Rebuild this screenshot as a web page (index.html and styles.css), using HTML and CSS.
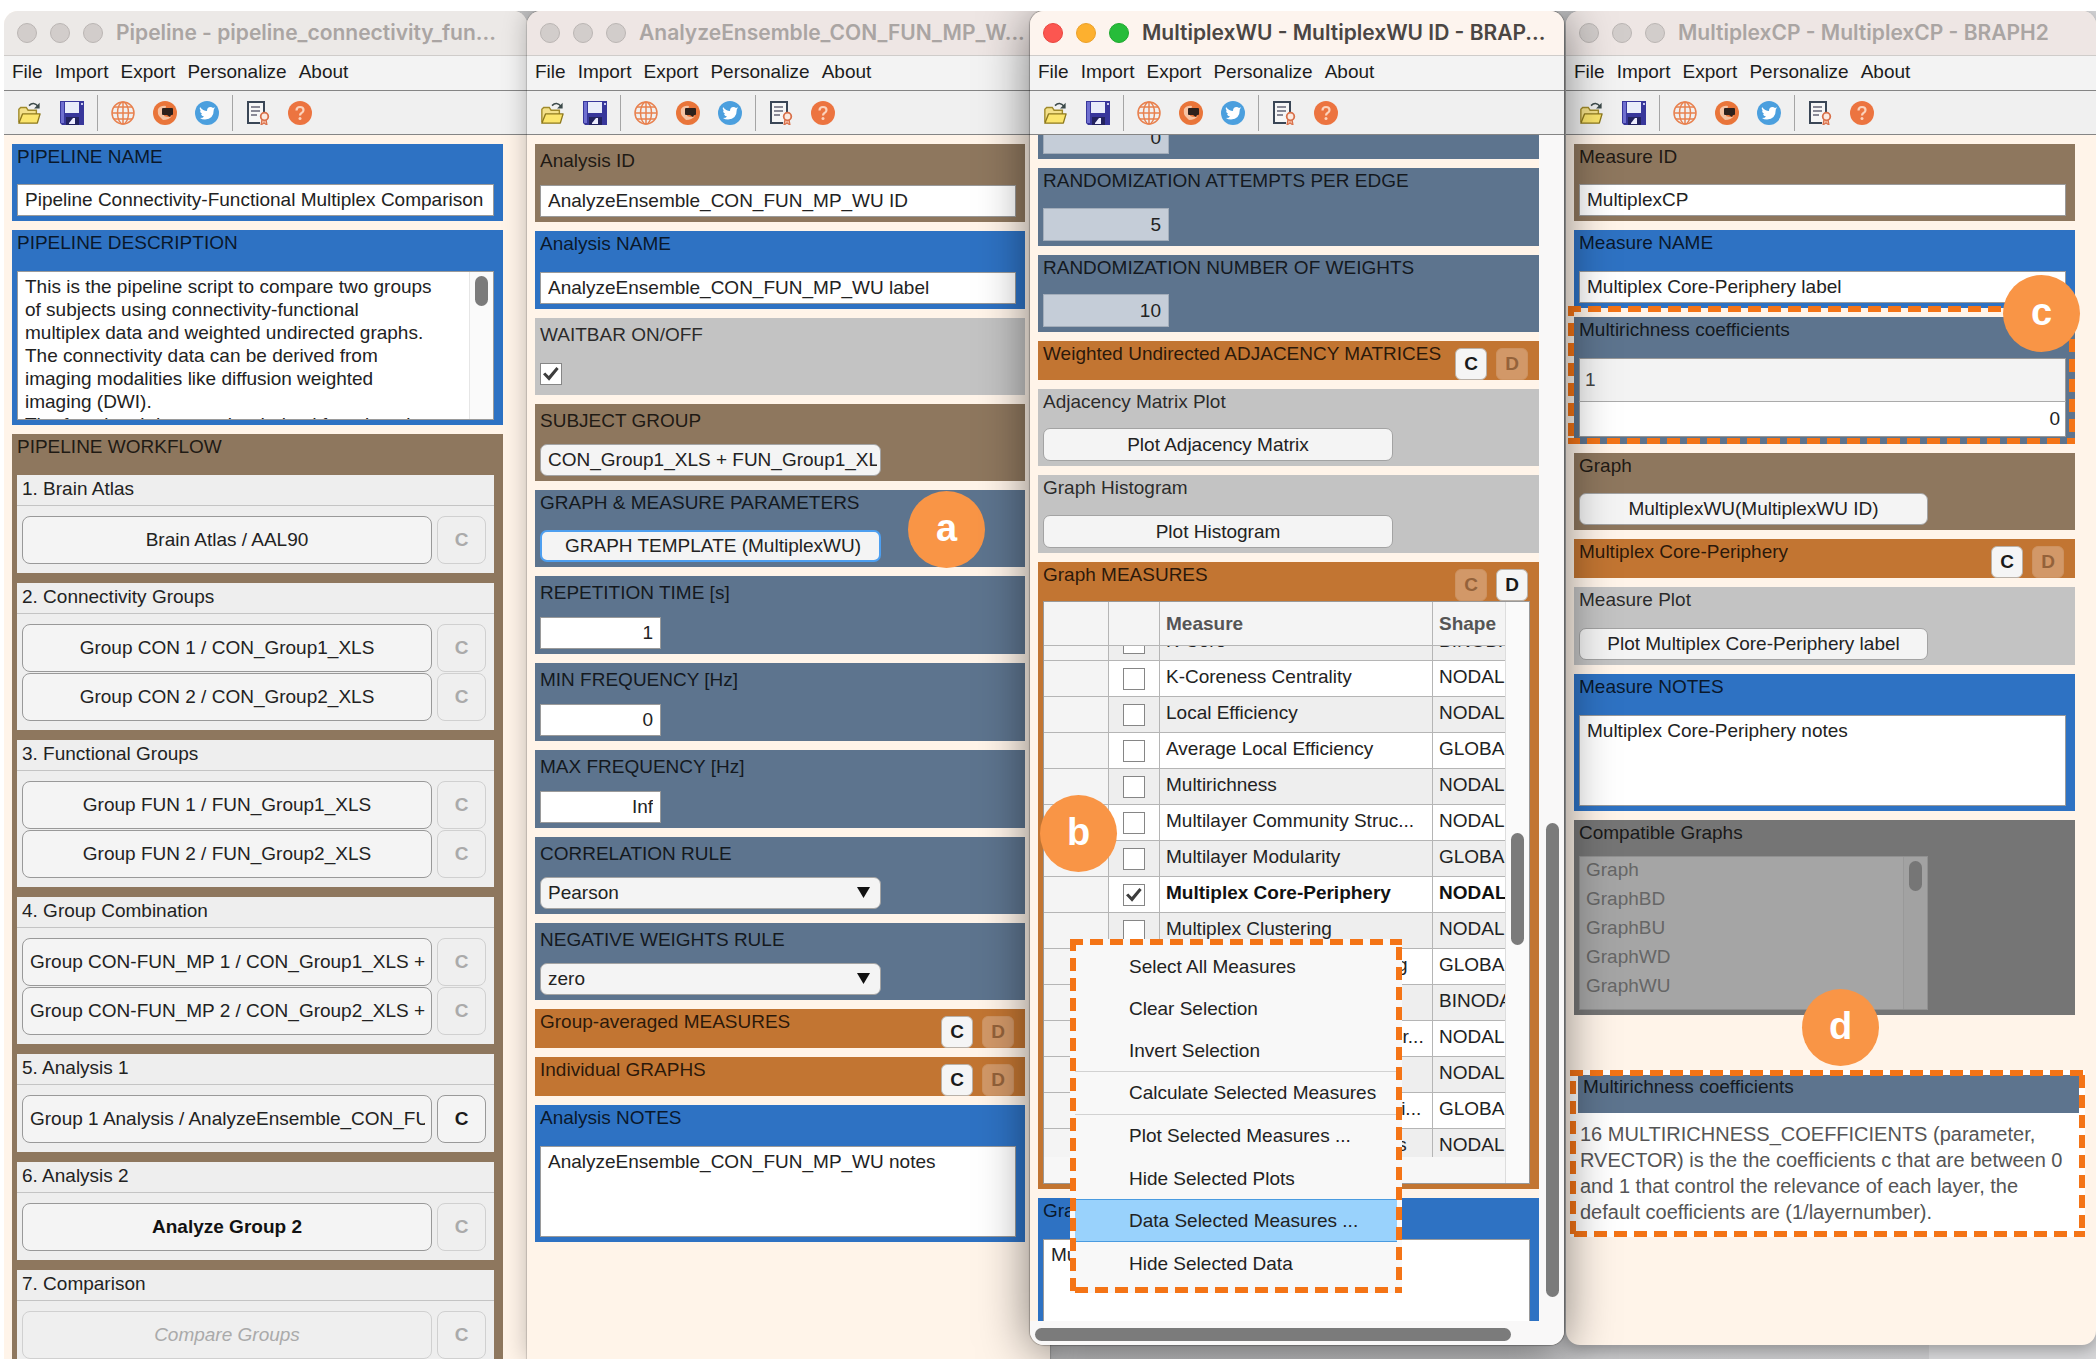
FILE: index.html
```html
<!DOCTYPE html>
<html lang="en">
<head>
<meta charset="utf-8">
<title>BRAPH2</title>
<link rel="stylesheet" href="styles.css">
</head>
<body>
<svg class="sprite" aria-hidden="true">
  <symbol id="i-open" viewBox="0 0 26 26">
    <path d="M2 23V9l2-2h6l2 3h9v4" fill="#f3e08a" stroke="#a08a2a" stroke-width="1.5"/>
    <path d="M2 24l4-10h19l-3 10z" fill="#fbe56c" stroke="#8f7a1e" stroke-width="1.5" stroke-linejoin="round"/>
    <path d="M13 5q5-5 10 1" fill="none" stroke="#3c4a4a" stroke-width="1.6"/>
    <path d="M24.500 2v6h-6z" fill="#3c4a4a"/>
  </symbol>
  <symbol id="i-save" viewBox="0 0 24 24">
    <path d="M0 0h24v24H2l-2-2z" fill="#38379b"/>
    <path d="M1 1h3v21H1z" fill="#6f6fd0"/>
    <path d="M5 1h14v11H5z" fill="#e9edfa"/>
    <path d="M21 2h2v2h-2z" fill="#c9c9f0"/>
    <path d="M6 16h13v8H6z" fill="#23235f"/>
    <path d="M9 22l4-5h2v6H9z" fill="#eef"/>
  </symbol>
  <symbol id="i-web" viewBox="0 0 24 24">
    <g fill="none" stroke="#e8814f" stroke-width="1.500">
      <circle cx="12" cy="12" r="11"/><ellipse cx="12" cy="12" rx="5.500" ry="11"/>
      <path d="M12 1v22M1 12h22M3 6h18M3 18h18"/>
    </g>
  </symbol>
  <symbol id="i-forum" viewBox="0 0 24 24">
    <circle cx="12" cy="12" r="12" fill="#e9753a"/>
    <path d="M5 8q3-4 8-3l-2 10q5 2 8 0-3 4-9 4l-3-3q-3-3-2-8z" fill="#f6c3a3"/>
    <path d="M10 7h9q1 0 1 1v5q0 1-1 1h-1l-1 2-3-2h-4q-1 0-1-1V8q0-1 1-1z" fill="#2e211c"/>
  </symbol>
  <symbol id="i-tw" viewBox="0 0 24 24">
    <circle cx="12" cy="12" r="12" fill="#4b9fde"/>
    <path d="M5 6q3 4 7 4 0-4 3.500-4 1.500 0 2.500 1l2-.8-1.200 2.300q0 9.500-8.800 10-3 0-5-1.500 3 0 4-1.500-2.500-.5-3-2.500h1.200Q5 11.500 5 9.500l1 .3Q4 8 5 6z" fill="#fff"/>
  </symbol>
  <symbol id="i-lic" viewBox="0 0 24 24">
    <path d="M14 22H2V1h16v12" fill="#f6f6f6" stroke="#3a4656" stroke-width="2"/>
    <path d="M5 6h9M5 10h9M5 14h6" stroke="#667" stroke-width="1.500"/>
    <path d="M16 18l-1 6 3-2 3 2-1-6" fill="#f3b49a" stroke="#d9714b" stroke-width="1.200"/>
    <circle cx="18.500" cy="15.500" r="3.800" fill="#fbe9e0" stroke="#d9714b" stroke-width="1.800"/>
  </symbol>
  <symbol id="i-help" viewBox="0 0 24 24">
    <circle cx="12" cy="12" r="12" fill="#ec7440"/>
    <path d="M8.500 9.500q0-3.500 3.500-3.500t3.500 3q0 2-2 3-1.500.8-1.500 2.500" fill="none" stroke="#fbd3bd" stroke-width="2.200"/>
    <circle cx="12" cy="17.500" r="1.500" fill="#fbd3bd"/>
  </symbol>
</svg>

<main class="desktop">

  <section class="window window-pipeline">
    <header class="titlebar"><i class="dot"></i><i class="dot"></i><i class="dot"></i><h2 class="title">Pipeline - pipeline_connectivity_fun...</h2></header>
    <nav class="menubar"><a href="#">File</a><a href="#">Import</a><a href="#">Export</a><a href="#">Personalize</a><a href="#">About</a></nav>
    <div class="toolbar">
      <button class="tool tool-open" aria-label="Open"><svg><use href="#i-open"/></svg></button>
      <button class="tool" aria-label="Save"><svg><use href="#i-save"/></svg></button>
      <span class="rule"></span>
      <button class="tool" aria-label="Website"><svg><use href="#i-web"/></svg></button>
      <button class="tool" aria-label="Forum"><svg><use href="#i-forum"/></svg></button>
      <button class="tool" aria-label="Twitter"><svg><use href="#i-tw"/></svg></button>
      <span class="rule"></span>
      <button class="tool" aria-label="License"><svg><use href="#i-lic"/></svg></button>
      <button class="tool" aria-label="Help"><svg><use href="#i-help"/></svg></button>
    </div>
    <div class="content">
      <div class="panel blue short">
        <label class="label" for="p-name">PIPELINE NAME</label>
        <input class="field" id="p-name" value="Pipeline Connectivity-Functional Multiplex Comparison">
      </div>
      <div class="panel blue">
        <label class="label label-gap" for="p-desc">PIPELINE DESCRIPTION</label>
        <div class="scrollbox">
          <textarea class="field area area-desc" id="p-desc">This is the pipeline script to compare two groups
of subjects using connectivity-functional
multiplex data and weighted undirected graphs.
The connectivity data can be derived from
imaging modalities like diffusion weighted
imaging (DWI).
The functional data can be derived from imaging</textarea>
          <div class="track"><i class="thumb thumb-short"></i></div>
        </div>
      </div>
      <div class="panel brown">
        <span class="label label-gap">PIPELINE WORKFLOW</span>
        <div class="steps">
          <section class="step">
            <h3 class="step-title">1. Brain Atlas</h3>
            <div class="step-grid"><button class="btn">Brain Atlas / AAL90</button><button class="btn clear" disabled>C</button></div>
          </section>
          <section class="step">
            <h3 class="step-title">2. Connectivity Groups</h3>
            <div class="step-grid">
              <button class="btn">Group CON 1 / CON_Group1_XLS</button><button class="btn clear" disabled>C</button>
              <button class="btn">Group CON 2 / CON_Group2_XLS</button><button class="btn clear" disabled>C</button>
            </div>
          </section>
          <section class="step">
            <h3 class="step-title">3. Functional Groups</h3>
            <div class="step-grid">
              <button class="btn">Group FUN 1 / FUN_Group1_XLS</button><button class="btn clear" disabled>C</button>
              <button class="btn">Group FUN 2 / FUN_Group2_XLS</button><button class="btn clear" disabled>C</button>
            </div>
          </section>
          <section class="step">
            <h3 class="step-title">4. Group Combination</h3>
            <div class="step-grid">
              <button class="btn long"><span>Group CON-FUN_MP 1 / CON_Group1_XLS +</span></button><button class="btn clear" disabled>C</button>
              <button class="btn long"><span>Group CON-FUN_MP 2 / CON_Group2_XLS +</span></button><button class="btn clear" disabled>C</button>
            </div>
          </section>
          <section class="step">
            <h3 class="step-title">5. Analysis 1</h3>
            <div class="step-grid"><button class="btn long"><span>Group 1 Analysis / AnalyzeEnsemble_CON_FU</span></button><button class="btn clear">C</button></div>
          </section>
          <section class="step">
            <h3 class="step-title">6. Analysis 2</h3>
            <div class="step-grid"><button class="btn strong">Analyze Group 2</button><button class="btn clear" disabled>C</button></div>
          </section>
          <section class="step">
            <h3 class="step-title">7. Comparison</h3>
            <div class="step-grid"><button class="btn pending" disabled>Compare Groups</button><button class="btn clear" disabled>C</button></div>
          </section>
        </div>
      </div>
    </div>
  </section>

  <section class="window window-analysis">
    <header class="titlebar"><i class="dot"></i><i class="dot"></i><i class="dot"></i><h2 class="title">AnalyzeEnsemble_CON_FUN_MP_W...</h2></header>
    <nav class="menubar"><a href="#">File</a><a href="#">Import</a><a href="#">Export</a><a href="#">Personalize</a><a href="#">About</a></nav>
    <div class="toolbar">
      <button class="tool tool-open" aria-label="Open"><svg><use href="#i-open"/></svg></button>
      <button class="tool" aria-label="Save"><svg><use href="#i-save"/></svg></button>
      <span class="rule"></span>
      <button class="tool" aria-label="Website"><svg><use href="#i-web"/></svg></button>
      <button class="tool" aria-label="Forum"><svg><use href="#i-forum"/></svg></button>
      <button class="tool" aria-label="Twitter"><svg><use href="#i-tw"/></svg></button>
      <span class="rule"></span>
      <button class="tool" aria-label="License"><svg><use href="#i-lic"/></svg></button>
      <button class="tool" aria-label="Help"><svg><use href="#i-help"/></svg></button>
    </div>
    <div class="content">
      <div class="panel brown">
        <label class="label low" for="a-id">Analysis ID</label>
        <input class="field" id="a-id" value="AnalyzeEnsemble_CON_FUN_MP_WU ID">
      </div>
      <div class="panel blue">
        <label class="label" for="a-name">Analysis NAME</label>
        <input class="field" id="a-name" value="AnalyzeEnsemble_CON_FUN_MP_WU label">
      </div>
      <div class="panel gray short">
        <label class="label low" for="a-wait">WAITBAR ON/OFF</label>
        <input class="check check-wait" type="checkbox" id="a-wait" checked>
      </div>
      <div class="panel brown short">
        <span class="label low">SUBJECT GROUP</span>
        <button class="pill pill-long"><span>CON_Group1_XLS + FUN_Group1_XLS</span></button>
      </div>
      <div class="panel slate short">
        <span class="label">GRAPH &amp; MEASURE PARAMETERS</span>
        <button class="pill focused">GRAPH TEMPLATE (MultiplexWU)</button>
        <b class="marker marker-a">a</b>
      </div>
      <div class="panel slate">
        <label class="label low" for="a-rep">REPETITION TIME [s]</label>
        <input class="field number" id="a-rep" value="1">
      </div>
      <div class="panel slate">
        <label class="label low" for="a-min">MIN FREQUENCY [Hz]</label>
        <input class="field number" id="a-min" value="0">
      </div>
      <div class="panel slate">
        <label class="label low" for="a-max">MAX FREQUENCY [Hz]</label>
        <input class="field number" id="a-max" value="Inf">
      </div>
      <div class="panel slate short">
        <label class="label low" for="a-corr">CORRELATION RULE</label>
        <div class="dropdown"><select class="pill" id="a-corr"><option>Pearson</option></select></div>
      </div>
      <div class="panel slate short">
        <label class="label low" for="a-neg">NEGATIVE WEIGHTS RULE</label>
        <div class="dropdown"><select class="pill" id="a-neg"><option>zero</option></select></div>
      </div>
      <div class="panel orange bar">
        <span class="label">Group-averaged MEASURES</span>
        <button class="key">C</button><button class="key" disabled>D</button>
      </div>
      <div class="panel orange bar">
        <span class="label">Individual GRAPHS</span>
        <button class="key">C</button><button class="key" disabled>D</button>
      </div>
      <div class="panel blue">
        <label class="label label-gap" for="a-notes">Analysis NOTES</label>
        <textarea class="field area" id="a-notes">AnalyzeEnsemble_CON_FUN_MP_WU notes</textarea>
      </div>
    </div>
  </section>

  <section class="window window-graph">
    <header class="titlebar"><i class="dot red"></i><i class="dot amber"></i><i class="dot green"></i><h2 class="title">MultiplexWU - MultiplexWU ID - BRAP...</h2></header>
    <nav class="menubar"><a href="#">File</a><a href="#">Import</a><a href="#">Export</a><a href="#">Personalize</a><a href="#">About</a></nav>
    <div class="toolbar">
      <button class="tool tool-open" aria-label="Open"><svg><use href="#i-open"/></svg></button>
      <button class="tool" aria-label="Save"><svg><use href="#i-save"/></svg></button>
      <span class="rule"></span>
      <button class="tool" aria-label="Website"><svg><use href="#i-web"/></svg></button>
      <button class="tool" aria-label="Forum"><svg><use href="#i-forum"/></svg></button>
      <button class="tool" aria-label="Twitter"><svg><use href="#i-tw"/></svg></button>
      <span class="rule"></span>
      <button class="tool" aria-label="License"><svg><use href="#i-lic"/></svg></button>
      <button class="tool" aria-label="Help"><svg><use href="#i-help"/></svg></button>
    </div>
    <div class="viewport">
      <div class="content content-scrolled">
        <div class="panel slate scrolled">
          <input class="field number readonly" aria-label="Value" value="0" readonly>
        </div>
        <div class="panel slate">
          <label class="label" for="g-att">RANDOMIZATION ATTEMPTS PER EDGE</label>
          <input class="field number readonly" id="g-att" value="5" readonly>
        </div>
        <div class="panel slate short">
          <label class="label" for="g-num">RANDOMIZATION NUMBER OF WEIGHTS</label>
          <input class="field number readonly" id="g-num" value="10" readonly>
        </div>
        <div class="panel orange bar">
          <span class="label">Weighted Undirected ADJACENCY MATRICES</span>
          <button class="key">C</button><button class="key" disabled>D</button>
        </div>
        <div class="panel gray short">
          <span class="label">Adjacency Matrix Plot</span>
          <button class="pill">Plot Adjacency Matrix</button>
        </div>
        <div class="panel gray">
          <span class="label">Graph Histogram</span>
          <button class="pill">Plot Histogram</button>
        </div>
        <div class="panel orange measures">
          <div class="bar"><span class="label">Graph MEASURES</span><button class="key" disabled>C</button><button class="key">D</button></div>
          <div class="grid-frame">
            <div class="grid-clip">
              <table class="grid">
                <colgroup><col class="c-row"><col class="c-check"><col class="c-name"><col></colgroup>
                <thead><tr><th></th><th></th><th>Measure</th><th>Shape</th></tr></thead>
                <tbody>
                  <tr class="partial"><td></td><td><div><input class="check" type="checkbox" aria-label="K-Core"></div></td><td><div>K-Core</div></td><td><div>BINODAL</div></td></tr>
                  <tr><td></td><td><input class="check" type="checkbox" aria-label="K-Coreness Centrality"></td><td>K-Coreness Centrality</td><td>NODAL</td></tr>
                  <tr><td></td><td><input class="check" type="checkbox" aria-label="Local Efficiency"></td><td>Local Efficiency</td><td>NODAL</td></tr>
                  <tr><td></td><td><input class="check" type="checkbox" aria-label="Average Local Efficiency"></td><td>Average Local Efficiency</td><td>GLOBAL</td></tr>
                  <tr><td></td><td><input class="check" type="checkbox" aria-label="Multirichness"></td><td>Multirichness</td><td>NODAL</td></tr>
                  <tr><td></td><td><input class="check" type="checkbox" aria-label="Multilayer Community Structure"></td><td>Multilayer Community Struc...</td><td>NODAL</td></tr>
                  <tr><td></td><td><input class="check" type="checkbox" aria-label="Multilayer Modularity"></td><td>Multilayer Modularity</td><td>GLOBAL</td></tr>
                  <tr class="picked"><td></td><td><input class="check" type="checkbox" aria-label="Multiplex Core-Periphery" checked></td><td>Multiplex Core-Periphery</td><td>NODAL</td></tr>
                  <tr><td></td><td><input class="check" type="checkbox" aria-label="Multiplex Clustering"></td><td>Multiplex Clustering</td><td>NODAL</td></tr>
                  <tr><td></td><td><input class="check" type="checkbox" aria-label="Average Multiplex Clustering"></td><td>Average Multiplex Clustering</td><td>GLOBAL</td></tr>
                  <tr><td></td><td><input class="check" type="checkbox" aria-label="Multiplex K-Core"></td><td>Multiplex K-Core</td><td>BINODAL</td></tr>
                  <tr><td></td><td><input class="check" type="checkbox" aria-label="Multiplex K-Coreness Centrality"></td><td>Multiplex K-Coreness Center...</td><td>NODAL</td></tr>
                  <tr><td></td><td><input class="check" type="checkbox" aria-label="Multiplex Participation"></td><td>Multiplex Participation</td><td>NODAL</td></tr>
                  <tr><td></td><td><input class="check" type="checkbox" aria-label="Average Multiplex Participation"></td><td>Average Multiplex Participati...</td><td>GLOBAL</td></tr>
                  <tr><td></td><td><input class="check" type="checkbox" aria-label="Multiplex Rich-Club Degrees"></td><td>Multiplex Rich-Club Degrees</td><td>NODAL</td></tr>
                </tbody>
              </table>
            </div>
            <div class="grid-track"><i class="thumb thumb-grid"></i></div>
          </div>
          <b class="marker marker-b">b</b>
          <div class="menu">
            <svg class="dashes"><rect width="100%" height="100%"/></svg>
            <button class="item">Select All Measures</button>
            <button class="item">Clear Selection</button>
            <button class="item">Invert Selection</button>
            <button class="item split">Calculate Selected Measures</button>
            <button class="item split">Plot Selected Measures ...</button>
            <button class="item">Hide Selected Plots</button>
            <button class="item active">Data Selected Measures ...</button>
            <button class="item">Hide Selected Data</button>
          </div>
        </div>
        <div class="panel blue notes-cut">
          <label class="label label-gap" for="g-notes">Graph NOTES</label>
          <textarea class="field area" id="g-notes">MultiplexWU notes</textarea>
        </div>
      </div>
      <div class="vtrack"><i class="thumb thumb-page"></i></div>
    </div>
    <div class="htrack"><i class="thumb-wide"></i></div>
  </section>

  <section class="window window-measure">
    <header class="titlebar"><i class="dot"></i><i class="dot"></i><i class="dot"></i><h2 class="title">MultiplexCP - MultiplexCP - BRAPH2</h2></header>
    <nav class="menubar"><a href="#">File</a><a href="#">Import</a><a href="#">Export</a><a href="#">Personalize</a><a href="#">About</a></nav>
    <div class="toolbar">
      <button class="tool tool-open" aria-label="Open"><svg><use href="#i-open"/></svg></button>
      <button class="tool" aria-label="Save"><svg><use href="#i-save"/></svg></button>
      <span class="rule"></span>
      <button class="tool" aria-label="Website"><svg><use href="#i-web"/></svg></button>
      <button class="tool" aria-label="Forum"><svg><use href="#i-forum"/></svg></button>
      <button class="tool" aria-label="Twitter"><svg><use href="#i-tw"/></svg></button>
      <span class="rule"></span>
      <button class="tool" aria-label="License"><svg><use href="#i-lic"/></svg></button>
      <button class="tool" aria-label="Help"><svg><use href="#i-help"/></svg></button>
    </div>
    <div class="content">
      <div class="panel brown short">
        <label class="label" for="m-id">Measure ID</label>
        <input class="field" id="m-id" value="MultiplexCP">
      </div>
      <div class="panel blue">
        <label class="label" for="m-name">Measure NAME</label>
        <input class="field" id="m-name" value="Multiplex Core-Periphery label">
      </div>
      <div class="panel slate coefficients">
        <span class="label label-gap">Multirichness coefficients</span>
        <table class="vector">
          <thead><tr><th>1</th></tr></thead>
          <tbody><tr><td>0</td></tr></tbody>
        </table>
        <svg class="dashes dashes-wide"><rect width="100%" height="100%"/></svg>
        <b class="marker marker-c">c</b>
      </div>
      <div class="panel brown short">
        <span class="label">Graph</span>
        <button class="pill">MultiplexWU(MultiplexWU ID)</button>
      </div>
      <div class="panel orange bar">
        <span class="label">Multiplex Core-Periphery</span>
        <button class="key">C</button><button class="key" disabled>D</button>
      </div>
      <div class="panel gray">
        <span class="label">Measure Plot</span>
        <button class="pill">Plot Multiplex Core-Periphery label</button>
      </div>
      <div class="panel blue">
        <label class="label label-gap" for="m-notes">Measure NOTES</label>
        <textarea class="field area" id="m-notes">Multiplex Core-Periphery notes</textarea>
      </div>
      <div class="panel dark">
        <label class="label label-gap" for="m-graphs">Compatible Graphs</label>
        <div class="listwrap">
          <select class="list" id="m-graphs" multiple disabled>
            <option>Graph</option><option>GraphBD</option><option>GraphBU</option><option>GraphWD</option><option>GraphWU</option>
          </select>
          <div class="track track-dim"><i class="thumb thumb-short"></i></div>
        </div>
      </div>
      <aside class="callout">
        <svg class="dashes"><rect width="100%" height="100%"/></svg>
        <h3 class="callout-title">Multirichness coefficients</h3>
        <p class="callout-text">16 MULTIRICHNESS_COEFFICIENTS (parameter, RVECTOR) is the the coefficients c that are between 0 and 1 that control the relevance of each layer, the default coefficients are (1/layernumber).</p>
        <b class="marker marker-d">d</b>
      </aside>
    </div>
  </section>

</main>
</body>
</html>
```
FILE: styles.css
```css
* { box-sizing: border-box; }

body {
  margin: 0;
  padding: 11px 4px;
  background: #fff;
  font: 19px/22px "Liberation Sans", Arial, sans-serif;
  color: #222;
}

button, input, textarea, select { font: inherit; color: inherit; margin: 0; }
h2, h3, p { margin: 0; font: inherit; }
.sprite { position: absolute; width: 0; height: 0; }

/* Desktop and windows */
.desktop {
  display: grid;
  grid-template-columns: 523fr 503fr 536fr 530fr;
  height: calc(100vh - 22px);
  overflow: hidden;
  background: linear-gradient(to right, #fff 20px, #bdbdbe 20px, #c8c8ca 92%, #d6d6d8 92%);
}

.window {
  position: relative;
  display: flex;
  flex-direction: column;
  min-width: 0;
  min-height: 0;
  overflow: hidden;
  border-radius: 14px 14px 0 0;
  background: #fff4e9;
}
.window-analysis { z-index: 1; margin-right: -20px; box-shadow: 0 0 24px rgba(0, 0, 0, .25), 0 0 1px 1px rgba(0, 0, 0, .15); }
.window-graph { z-index: 3; margin: 0 2px 14px 0; border-radius: 14px; box-shadow: 0 6px 50px rgba(0, 0, 0, .5), 0 0 1px 1px rgba(0, 0, 0, .25); }
.window-measure { z-index: 2; margin-bottom: 14px; border-radius: 14px; box-shadow: 0 4px 16px rgba(0, 0, 0, .3); }

.titlebar {
  display: flex;
  align-items: center;
  flex: none;
  gap: 13px;
  height: 45px;
  padding-left: 13px;
  background: #ece9e7;
  border-bottom: 1px solid #cfccca;
}
.window-analysis .titlebar, .window-measure .titlebar { background: #eee6e4; }
.window-graph .titlebar { background: #fdf4ee; }

.dot { width: 20px; height: 20px; flex: none; border-radius: 50%; background: #d2cdcb; border: 1px solid #bab5b3; }
.dot.red { background: #fc5650; border-color: #e8463f; }
.dot.amber { background: #fdb02f; border-color: #eaa02a; }
.dot.green { background: #26bc3a; border-color: #1fa82f; }

.title { font: 600 21px/24px Inter, sans-serif; color: #aaa5a3; white-space: nowrap; }
.window-graph .title { color: #4b4643; }

.menubar {
  display: flex;
  flex: none;
  align-items: center;
  gap: 12px;
  height: 35px;
  padding: 0 8px 2px;
  background: #f3f3f3;
  border-bottom: 1px solid #858585;
}
.menubar a { color: #1c1c1c; text-decoration: none; }

.toolbar {
  display: flex;
  flex: none;
  align-items: center;
  gap: 18px;
  height: 44px;
  padding-left: 12px;
  background: #f0f0f0;
  border-bottom: 1px solid #858585;
}
.tool { width: 24px; height: 24px; padding: 0; border: 0; background: none; }
.tool-open { width: 26px; }
.tool svg { display: block; width: 100%; height: 100%; }
.rule { width: 1px; height: 36px; margin: 0 -5px; background: #a5a5a5; }

.content {
  display: flex;
  flex-direction: column;
  gap: 9px;
  flex: 1;
  min-height: 0;
  padding: 9px 24px 0 8px;
}
.window-analysis .content { padding-right: 25px; }
.window-measure .content { padding-right: 21px; }

/* Panels */
.panel {
  position: relative;
  display: flex;
  flex-direction: column;
  flex: none;
  justify-content: space-between;
  align-items: flex-start;
  min-height: 78px;
  padding: 2px 9px 5px 5px;
}
.panel.short { min-height: 77px; }
.blue { background: #2e72c3; }
.brown { background: #8e775e; }
.gray { background: #c3c3c3; }
.slate { background: #5d748e; }
.orange { background: #c27532; }
.dark { background: #757575; }

.label { color: rgba(0, 0, 0, .8); white-space: nowrap; }
.label.low { padding-top: 4px; }
.label-gap { margin-bottom: 17px; }

.field {
  display: block;
  width: 100%;
  height: 32px;
  padding: 0 7px;
  border: 1px solid #9a9a9a;
  border-radius: 0;
  background: #fff;
  outline: 0;
}
.number { width: 121px; text-align: right; }
.readonly { width: 126px; height: 33px; background: #c5cdd8; border-color: #a3adba; }
.area { height: 91px; padding: 3px 7px; line-height: 23px; resize: none; overflow: hidden; }
.area-desc { height: 149px; white-space: pre; }

.scrollbox { position: relative; width: 100%; }
.track { position: absolute; top: 1px; right: 1px; bottom: 1px; width: 24px; background: #fafafa; border-left: 1px solid #e6e6e6; }
.thumb { position: absolute; width: 13px; border-radius: 7px; background: #7b7b7b; }
.thumb-short { top: 4px; left: 5px; height: 30px; }
.track-dim { background: #a2a2a2; border-color: #999; }
.track-dim .thumb { background: #767676; }

.pill {
  width: 341px;
  height: 32px;
  padding: 0 7px;
  border: 1px solid #a3a3a3;
  border-radius: 7px;
  background: #f4f4f4;
  text-align: center;
  white-space: nowrap;
}
.window-graph .pill { width: 350px; height: 33px; }
.window-measure .pill { width: 349px; }
.pill-long { padding-right: 3px; }
.pill-long span, .long span { display: block; overflow: hidden; text-align: left; }
.pill.focused { border: 2px solid #4d9ff0; padding-left: 12px; }
.dropdown { position: relative; }
.dropdown .pill { appearance: none; display: block; text-align: left; }
.dropdown::after {
  content: "";
  position: absolute;
  top: 10px;
  right: 11px;
  width: 13px;
  height: 11px;
  background: #111;
  clip-path: polygon(0 0, 100% 0, 50% 100%);
}

.check {
  appearance: none;
  position: relative;
  display: block;
  width: 22px;
  height: 22px;
  border: 1px solid #868686;
  background: #fff;
}
.check:checked::before {
  content: "";
  position: absolute;
  inset: 2px;
  background: #3d3d3d;
  clip-path: polygon(0 52%, 14% 40%, 36% 62%, 84% 6%, 98% 18%, 38% 92%);
}
.check-wait { margin-bottom: 5px; }

.bar { display: flex; flex-direction: row; gap: 9px; align-items: flex-start; min-height: 39px; padding: 2px 11px 0 5px; }
.bar .label { flex: 1; min-width: 0; }
.key {
  flex: none;
  width: 32px;
  height: 32px;
  margin-top: 5px;
  padding: 0;
  border: 1px solid #b9b1a8;
  border-radius: 6px;
  background: #f5f5f5;
  font-weight: bold;
  color: #1a1a1a;
}
.key:disabled { background: #d29868; border-color: #cd9260; color: #94623a; }

/* Pipeline workflow */
.steps { display: flex; flex-direction: column; gap: 10px; width: 100%; }
.step { height: auto; padding-bottom: 9px; background: #eee; }
.step-title { height: 31px; padding: 3px 5px; border-bottom: 1px solid #c4c4c4; }
.step-grid { display: grid; grid-template-columns: minmax(0, 1fr) 49px; gap: 1px 5px; padding: 10px 8px 0 5px; }
.btn {
  height: 48px;
  padding: 0 3px;
  border: 1px solid #999;
  border-radius: 8px;
  background: #f4f4f4;
  white-space: nowrap;
}
.long { padding: 0 6px 0 7px; }
.clear { padding: 0; font-weight: bold; color: #1a1a1a; }
.strong { font-weight: bold; color: #111; }
.btn:disabled { border-color: #d0d0d0; background: #efefef; color: #aaa; }
.pending { font-style: italic; }

/* Scrolled graph window */
.viewport { display: flex; flex: 1; min-height: 0; }
.content-scrolled { padding: 0 0 0 8px; min-width: 0; }
.scrolled { justify-content: flex-end; min-height: 0; height: 24px; overflow: hidden; }
.scrolled .field { flex: none; }
.vtrack { position: relative; flex: none; width: 25px; background: #f9f8f8; }
.thumb-page { top: 58%; left: 7px; height: 40%; }
.htrack { flex: none; height: 24px; padding: 7px 53px 0 5px; background: #f9f8f8; }
.thumb-wide { display: block; height: 13px; border-radius: 7px; background: #7b7b7b; }
.notes-cut { flex: 1; min-height: 0; padding-bottom: 0; }
.notes-cut .area { flex: 1; border-bottom: 0; }

.measures { display: block; padding: 0 9px 5px 5px; }
.measures .bar { padding: 2px 2px 0 0; }
.grid-frame { display: flex; height: 583px; background: #f7f7f7; border: 1px solid #999; }
.grid-clip { flex: 1; min-width: 0; height: 555px; overflow: hidden; }
.grid-track { position: relative; flex: none; width: 24px; background: #fafafa; border-left: 1px solid #ddd; }
.thumb-grid { top: 231px; left: 5px; height: 112px; }

.grid { width: 100%; table-layout: fixed; border-collapse: separate; border-spacing: 0; }
.c-row { width: 65px; }
.c-check { width: 51px; }
.c-name { width: 273px; }
.grid th, .grid td {
  height: 36px;
  padding: 0 0 3px 6px;
  border-right: 1px solid #b5b5b5;
  border-bottom: 1px solid #b5b5b5;
  text-align: left;
  overflow: hidden;
  white-space: nowrap;
}
.grid th { height: 44px; padding-bottom: 0; background: #f4f4f4; color: #555; }
.grid th:last-child, .grid td:last-child { border-right: 0; }
.grid td { background: #fff; }
.grid tr:nth-child(odd) td { background: #eee; }
.grid tbody td:first-child { background: #f4f4f4; }
.grid td:nth-child(2) { padding: 1px 0 0 14px; }
.grid .partial td { height: 15px; padding-top: 0; padding-bottom: 0; }
.partial div { display: flex; align-items: flex-end; height: 14px; padding-bottom: 8px; overflow: hidden; }
.partial .check { margin-bottom: -2px; }
.picked { font-weight: bold; color: #111; }

/* Context menu */
.menu {
  position: absolute;
  z-index: 2;
  top: 377px;
  left: 32px;
  width: 332px;
  padding: 6px 5px 9px;
  background: #f8f8f8;
}
.item {
  display: block;
  width: 100%;
  height: 42px;
  padding: 0 0 0 54px;
  border: 0;
  border-top: 1px solid transparent;
  background: none;
  text-align: left;
  white-space: nowrap;
}
.item.split { height: 43px; border-top-color: #d2d2d2; }
.item.active { height: 43px; background: #99d2fc; border: solid #4a9be0; border-width: 1px 0; }
.dashes { position: absolute; z-index: 1; inset: 0; width: 100%; height: 100%; pointer-events: none; }
.dashes rect { fill: none; stroke: #f47416; stroke-width: 12px; stroke-dasharray: 13 7; }

/* Markers */
.marker {
  position: absolute;
  z-index: 3;
  width: 77px;
  height: 77px;
  border-radius: 50%;
  background: #f99546;
  color: #fff;
  font: bold 38px/74px "Liberation Sans", Arial, sans-serif;
  text-align: center;
}
.marker-a { top: 1px; right: 40px; }
.marker-b { top: 233px; left: 2px; }
.marker-c { top: -42px; right: -5px; }
.marker-d { top: -81px; left: 232px; }

/* Measure window */
.coefficients { padding-bottom: 7px; }
.dashes-wide { top: -11px; left: -6px; width: calc(100% + 6px); height: calc(100% + 11px); }
.vector { width: 100%; border-collapse: collapse; border: 1px solid #999; }
.vector th { height: 43px; padding: 0 5px; background: #f3f3f3; color: #444; text-align: left; font-weight: normal; border-bottom: 1px solid #aaa; }
.vector td { height: 35px; padding: 0 5px; background: #fff; text-align: right; }

.listwrap { position: relative; width: 349px; }
.dark .label-gap { margin-bottom: 12px; }
.list {
  appearance: none;
  display: block;
  width: 100%;
  height: 154px;
  padding: 0;
  border: 1px solid #909090;
  border-radius: 0;
  background: #a5a5a5;
  opacity: 1;
  overflow: hidden;
}
.list option { min-height: 29px; padding: 2px 6px 4px; line-height: 23px; color: #666; }

.callout { position: relative; margin: 46px -10px 0 -4px; padding: 5px 6px 9px 8px; background: #fff; }
.callout-title { height: 38px; padding: 1px 5px; background: #5d748e; color: rgba(0, 0, 0, .8); }
.callout-text { padding: 8px 0 3px 2px; font-size: 20px; line-height: 26px; color: #555; }
```
